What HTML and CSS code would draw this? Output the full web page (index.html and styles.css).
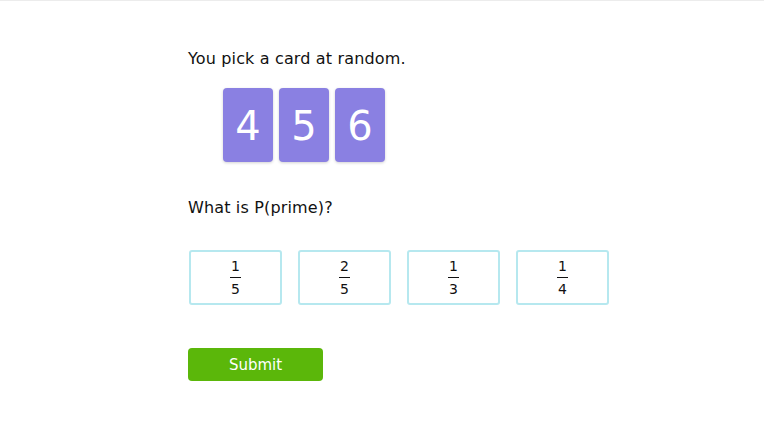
FILE: index.html
```html
<!DOCTYPE html>
<html>
<head>
<meta charset="utf-8">
<link rel="stylesheet" href="styles.css">
</head>
<body>
<div class="page">
  <p class="prompt">You pick a card at random.</p>
  <div class="cards">
    <div class="card">4</div>
    <div class="card">5</div>
    <div class="card">6</div>
  </div>
  <p class="question">What is P(prime)?</p>
  <div class="choices">
    <button class="choice"><span class="frac"><span class="num">1</span><span class="den">5</span></span></button>
    <button class="choice"><span class="frac"><span class="num">2</span><span class="den">5</span></span></button>
    <button class="choice"><span class="frac"><span class="num">1</span><span class="den">3</span></span></button>
    <button class="choice"><span class="frac"><span class="num">1</span><span class="den">4</span></span></button>
  </div>
  <button class="submit">Submit</button>
</div>
</body>
</html>
```
FILE: styles.css
```css
html, body {
  margin: 0;
  padding: 0;
  background: #fff;
}
body {
  border-top: 1px solid #ececec;
  font-family: "DejaVu Sans", Verdana, sans-serif;
  color: #111;
}
.page {
  padding: 48px 0 0 188px;
}
.prompt, .question {
  margin: 0;
  font-size: 16px;
  line-height: 20px;
  letter-spacing: 0.15px;
}
.cards {
  display: flex;
  gap: 6px;
  margin: 19px 0 0 35px;
}
.card {
  width: 50px;
  height: 74px;
  background: #8a80e2;
  border-radius: 4px;
  box-shadow: 0 1px 3px rgba(0,0,0,0.18);
  color: #fff;
  font-size: 40px;
  display: flex;
  align-items: center;
  justify-content: center;
  padding-top: 2px;
  box-sizing: border-box;
}
.question {
  margin-top: 36px;
}
.choices {
  display: flex;
  gap: 16px;
  margin: 32px 0 0 1px;
}
.choice {
  width: 93px;
  height: 55px;
  box-sizing: border-box;
  border: 2px solid #b6e8ef;
  border-radius: 3px;
  background: #fff;
  padding: 0;
  display: flex;
  align-items: center;
  justify-content: center;
  font-family: inherit;
  color: #111;
}
.frac {
  display: inline-flex;
  flex-direction: column;
  align-items: center;
  font-size: 14px;
  line-height: 16px;
}
.num {
  border-bottom: 1px solid #111;
  padding: 0 1px 3px;
}
.den {
  padding-top: 3px;
}
.submit {
  display: block;
  margin-top: 43px;
  width: 135px;
  height: 33px;
  border: none;
  border-radius: 4px;
  background: #5bb70a;
  color: #fff;
  font-family: inherit;
  font-size: 15px;
  padding: 0;
}
```
